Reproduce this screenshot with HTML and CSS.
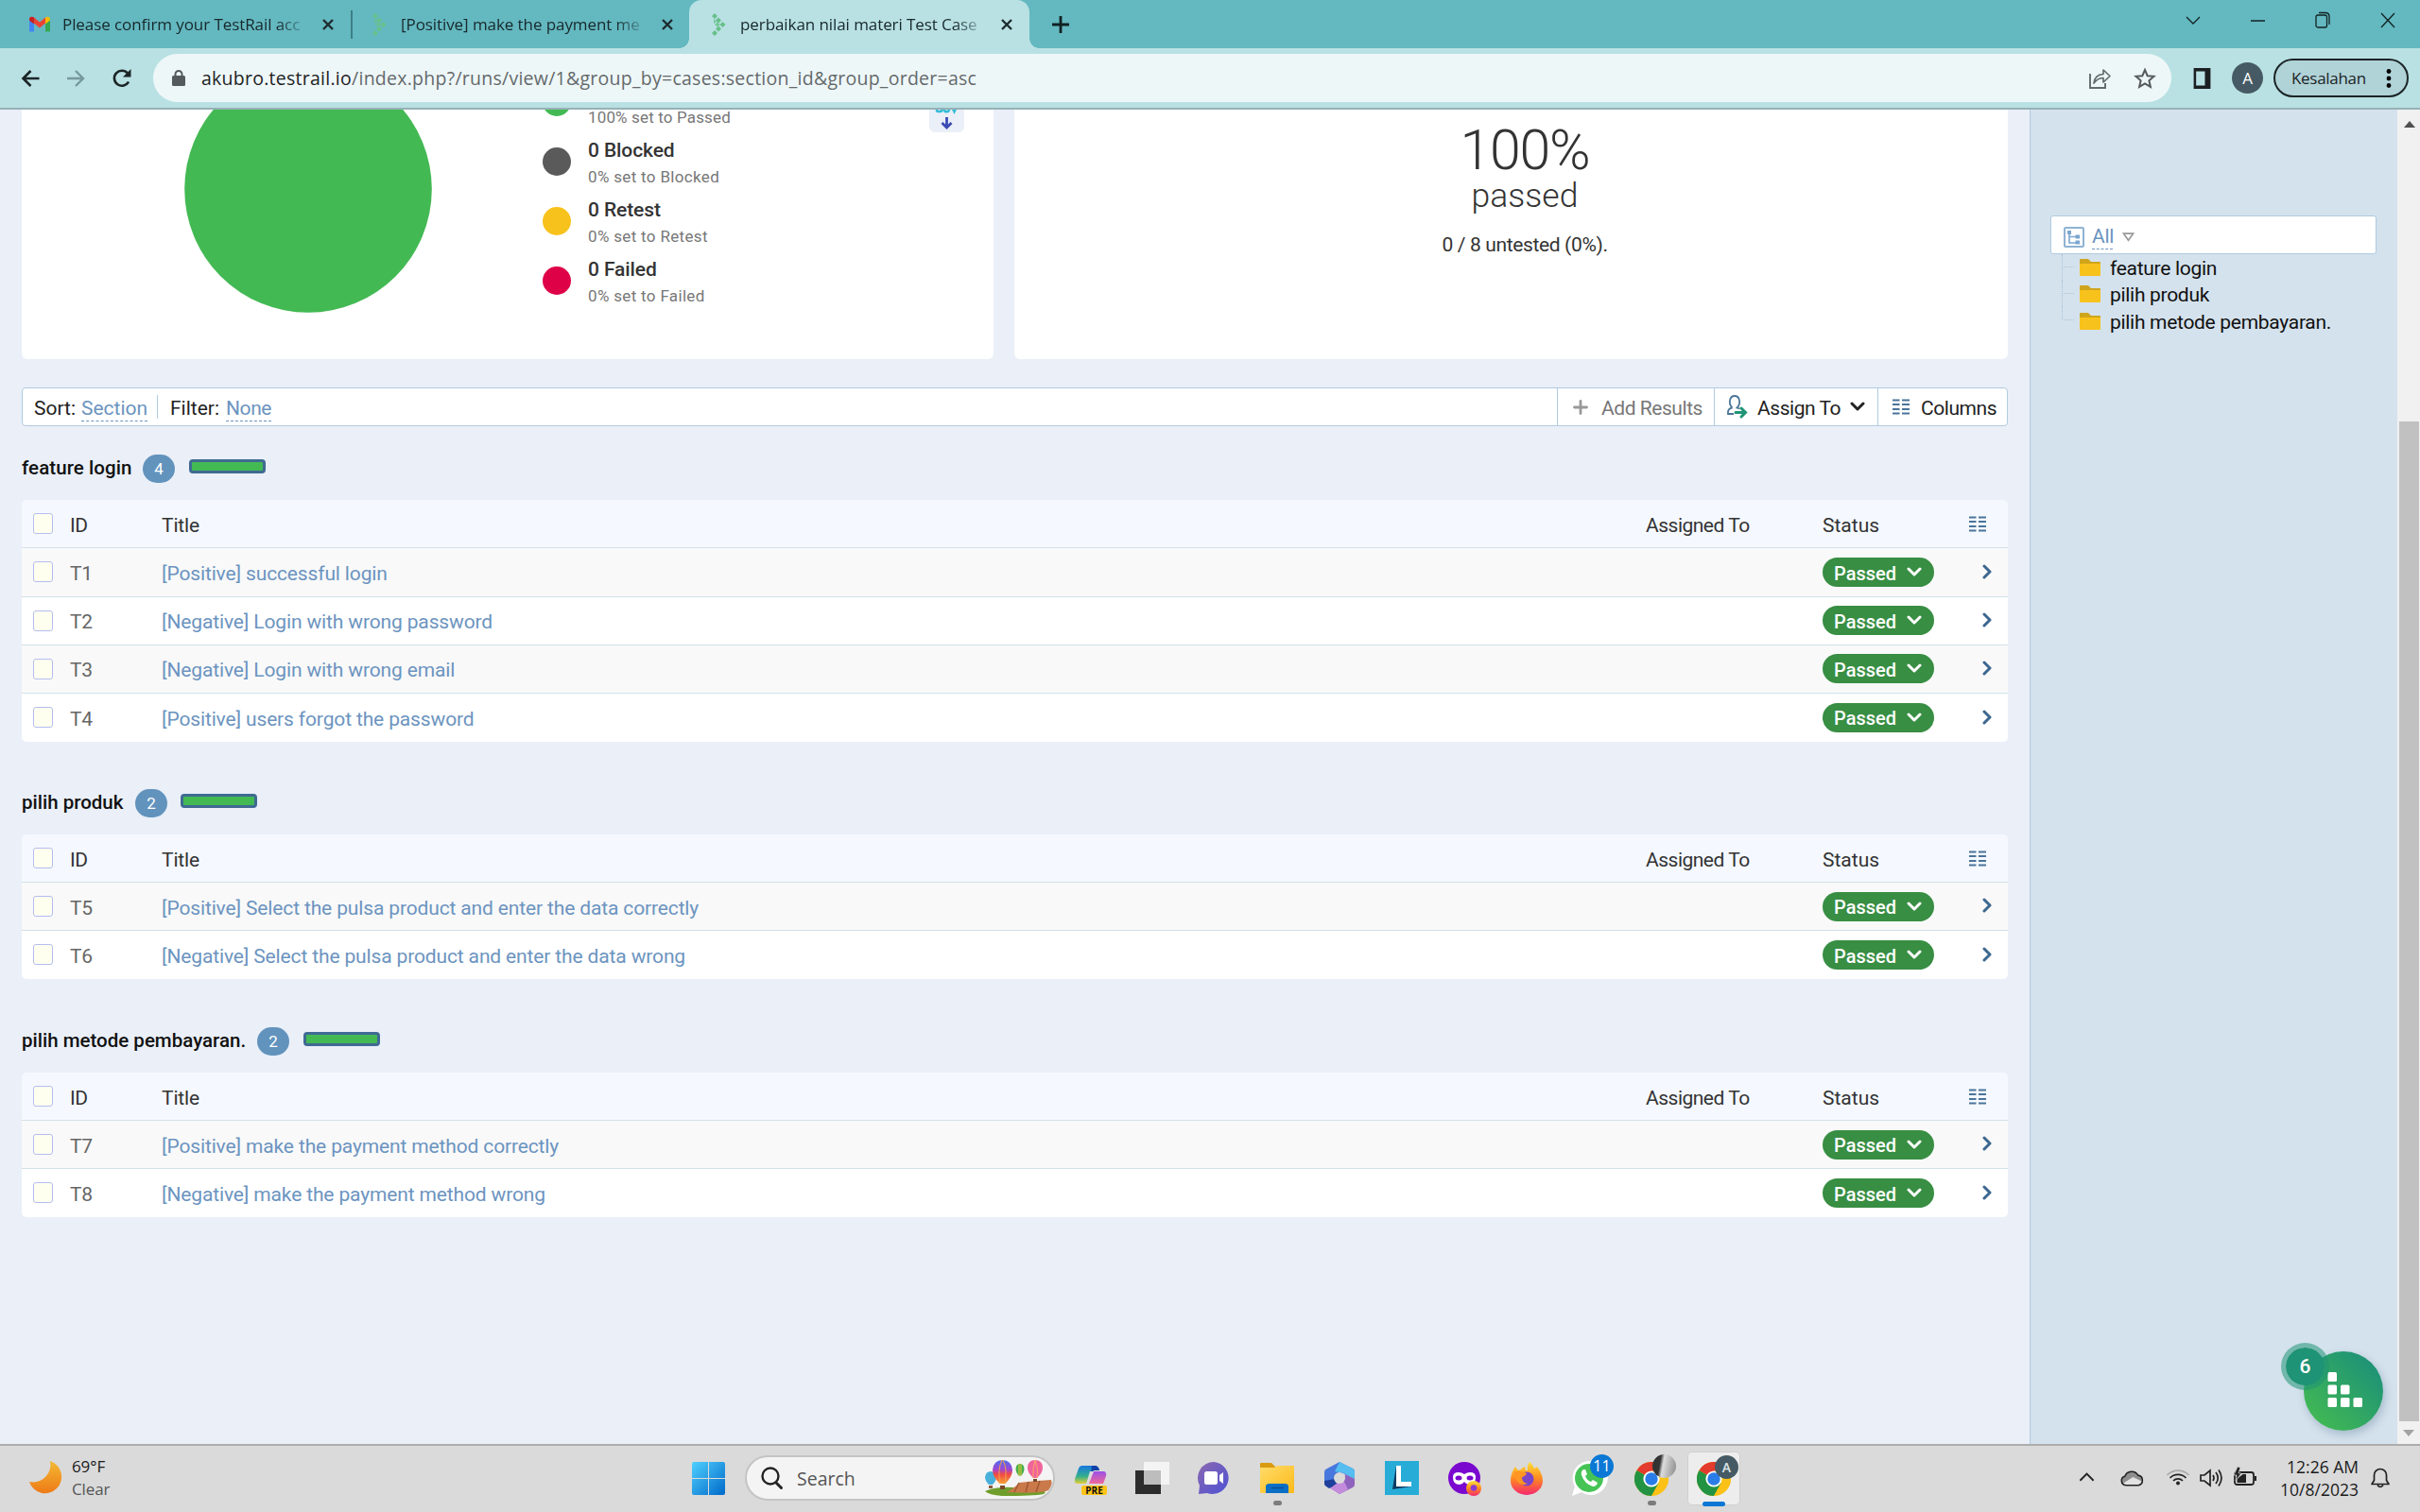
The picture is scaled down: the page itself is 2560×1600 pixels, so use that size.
FILE: index.html
```html
<!DOCTYPE html>
<html lang="en">
<head>
<meta charset="utf-8">
<title>perbaikan nilai materi Test Case</title>
<link rel="stylesheet" href="styles.css">
</head>
<body>
<svg class="defs" width="0" height="0">
  <defs>
    <symbol id="x" viewBox="0 0 14 14"><path d="M2 2l10 10M12 2L2 12" stroke="#1d2b2e" stroke-width="2.4" fill="none"/></symbol>
    <symbol id="rail" viewBox="0 0 16 24"><g fill="#67c08a"><path d="M4 0l3 3-3 3-3-3zM8 4.500l3 3-3 3-3-3zM12.500 9l3 3-3 3-3-3zM8 13.500l3 3-3 3-3-3zM4 18l3 3-3 3-3-3z"/><path d="M3 6l3 3-3 2zM7 9.500l3 2.500-3 2.500-3-2.500z" opacity=".8"/></g></symbol>
    <symbol id="down" viewBox="0 0 16 11"><path d="M2 2l6 6 6-6" fill="none" stroke="currentColor" stroke-width="3" stroke-linecap="round" stroke-linejoin="round"/></symbol>
    <symbol id="right" viewBox="0 0 11 16"><path d="M2 2l6 6-6 6" fill="none" stroke="#3c678f" stroke-width="3" stroke-linecap="round" stroke-linejoin="round"/></symbol>
    <symbol id="cols" viewBox="0 0 18 17"><path d="M0 1.500h7.500M10 1.500h8M0 6h7.500M10 6h8M0 11h7.500M10 11h8M0 15.500h7.500M10 15.500h8" stroke="#4a749a" stroke-width="1.800"/></symbol>
    <symbol id="folder" viewBox="0 0 22 18"><path d="M0 1q0-1 1-1h8l3 3h9q1 0 1 1v5H0z" fill="#cfa51c"/><path d="M0 5h22v12q0 1-1 1H1q-1 0-1-1z" fill="#f8c21c"/></symbol>
    <symbol id="chrome" viewBox="0 0 36 36"><circle cx="18" cy="18" r="18" fill="#fbc116"/><path d="M18 18L2.400 9A18 18 0 0 1 33.600 9z" fill="#e33b2e"/><path d="M18 18L2.400 9A18 18 0 0 0 18 36l8-13.500z" fill="#229342"/><path d="M18 9.500h15.800a18 18 0 0 1 .3 16L18 36l7.500-13.500z" fill="#fbc116"/><circle cx="18" cy="18" r="8.600" fill="#fff"/><circle cx="18" cy="18" r="6.700" fill="#2a7de9"/></symbol>
    <linearGradient id="gw" x1="0" y1="0" x2="1" y2="1"><stop offset="0" stop-color="#4fd0ff"/><stop offset="1" stop-color="#0069c8"/></linearGradient>
    <linearGradient id="gm" x1="0" y1="0" x2="0" y2="1"><stop offset="0" stop-color="#f3b932"/><stop offset="1" stop-color="#ee7a17"/></linearGradient>
    <linearGradient id="gc" x1="0" y1="0" x2="0" y2="1"><stop offset="0" stop-color="#1677e0"/><stop offset=".6" stop-color="#35b08c"/><stop offset="1" stop-color="#e6cf35"/></linearGradient>
    <linearGradient id="gp" x1="0" y1="0" x2="0" y2="1"><stop offset="0" stop-color="#9a4fe8"/><stop offset="1" stop-color="#f0689a"/></linearGradient>
    <linearGradient id="gt" x1="0" y1="0" x2="1" y2="1"><stop offset="0" stop-color="#8c68b0"/><stop offset="1" stop-color="#4e52d4"/></linearGradient>
    <linearGradient id="gf" x1="0" y1="0" x2="0" y2="1"><stop offset="0" stop-color="#ffe03a"/><stop offset=".5" stop-color="#ff8a20"/><stop offset="1" stop-color="#f4266e"/></linearGradient>
    <linearGradient id="ge" x1="0" y1="0" x2="1" y2="1"><stop offset="0" stop-color="#ffdc6a"/><stop offset="1" stop-color="#fbb918"/></linearGradient>
    <linearGradient id="gb" x1="0" y1="0" x2="0" y2="1"><stop offset="0" stop-color="#4c70f0"/><stop offset=".4" stop-color="#a046d0"/><stop offset=".6" stop-color="#f04848"/><stop offset="1" stop-color="#f5a030"/></linearGradient>
    <linearGradient id="gfab" x1="0" y1="1" x2="1" y2="0"><stop offset=".1" stop-color="#42b953"/><stop offset=".85" stop-color="#1f9375"/></linearGradient>
  </defs>
</svg>

<header class="tabstrip">
  <div class="tab tab-first">
    <svg class="gmail" viewBox="0 0 22 16"><path d="M0 3v13h5V7z" fill="#4285f4"/><path d="M17 7v9h5V3z" fill="#34a853"/><path d="M0 2.500Q1-1 5 1l6 5 6-5v6l-6 5-6-5z" fill="#ea4335"/><path d="M17 1q4-2 5 1.500V4l-5 4z" fill="#fbbc04"/><path d="M0 2.500Q1-1 5 1v7L0 4z" fill="#c5221f"/></svg>
    <span class="tabtext t1">Please confirm your TestRail acc</span>
    <svg class="close"><use href="#x"/></svg>
  </div>
  <div class="tab tab-second">
    <svg class="rail"><use href="#rail"/></svg>
    <span class="tabtext t2">[Positive] make the payment me</span>
    <svg class="close"><use href="#x"/></svg>
  </div>
  <div class="tab tab-active">
    <svg class="rail"><use href="#rail"/></svg>
    <span class="tabtext t3">perbaikan nilai materi Test Case</span>
    <svg class="close"><use href="#x"/></svg>
  </div>
  <svg class="plus" viewBox="0 0 20 20"><path d="M10 1v18M1 10h18" stroke="#122" stroke-width="2.800"/></svg>
  <div class="winctl">
    <svg width="16" height="10" viewBox="0 0 16 10"><path d="M1 1l7 7 7-7" fill="none" stroke="#122" stroke-width="1.300"/></svg>
    <svg width="15" height="10" viewBox="0 0 15 10"><path d="M0 5h15" stroke="#122" stroke-width="1.500"/></svg>
    <svg width="16" height="19" viewBox="0 0 16 19"><rect x="1" y="4" width="11.500" height="13" rx="2" fill="none" stroke="#122" stroke-width="1.300"/><path d="M4 1.500h7q4 0 4 4V14" fill="none" stroke="#122" stroke-width="1.300"/></svg>
    <svg width="16" height="19" viewBox="0 0 16 19"><path d="M1 2l14 15M15 2L1 17" stroke="#122" stroke-width="1.300"/></svg>
  </div>
</header>

<nav class="toolbar">
  <svg class="back" viewBox="0 0 20 20"><path d="M19 10H2M10 2l-8 8 8 8" fill="none" stroke="#1c2426" stroke-width="2.600"/></svg>
  <svg class="fwd" viewBox="0 0 20 20"><path d="M1 10h17M10 2l8 8-8 8" fill="none" stroke="#76999c" stroke-width="2.400"/></svg>
  <svg class="reload" viewBox="0 0 20 20"><path d="M17 13.500A8 8 0 1 1 16 4.500" fill="none" stroke="#1c2426" stroke-width="2.600"/><path d="M19.500 0v8.500H11z" fill="#1c2426"/></svg>
  <div class="omnibox">
    <svg class="lock" viewBox="0 0 14 17"><rect x="0" y="6" width="14" height="11" rx="1.500" fill="#555a5c"/><path d="M3.500 7V4.500a3.500 3.500 0 0 1 7 0V7" fill="none" stroke="#555a5c" stroke-width="2"/></svg>
    <span class="url"><b>akubro.testrail.io</b>/index.php?/runs/view/1&amp;group_by=cases:section_id&amp;group_order=asc</span>
    <svg class="share" viewBox="0 0 23 22"><path d="M1 6v15h16v-5" fill="none" stroke="#5f6b6d" stroke-width="1.900"/><path d="M5 16q1-9 10-9.500V2l7 6.500-7 6.500v-4.500q-6 0-10 5.500z" fill="none" stroke="#5f6b6d" stroke-width="1.700" stroke-linejoin="round"/></svg>
    <svg class="star" viewBox="0 0 22 22"><path d="M11 2l2.700 6.200 6.800.6-5.100 4.500 1.500 6.600-5.900-3.500-5.900 3.500 1.500-6.600L1.500 8.800l6.800-.6z" fill="none" stroke="#555a5c" stroke-width="2"/></svg>
  </div>
  <svg class="panel" viewBox="0 0 21 26"><path d="M0 0h21v26H0zM3 4v18h11V4z" fill="#1c1f21" fill-rule="evenodd"/></svg>
  <div class="avatar">A</div>
  <div class="update"><span>Kesalahan</span><svg viewBox="0 0 6 20"><circle cx="3" cy="2.500" r="2.400"/><circle cx="3" cy="10" r="2.400"/><circle cx="3" cy="17.500" r="2.400"/></svg></div>
</nav>

<div class="page">
  <main class="content">
    <div class="cards">
      <section class="card pie-card">
        <svg class="pie" viewBox="0 0 262 262"><circle cx="131" cy="131" r="130.800" fill="#43b953"/></svg>
        <ul class="legend">
          <li class="cut"><i class="dot green"></i><div><small>100% set to Passed</small></div></li>
          <li><i class="dot gray"></i><div><strong>0 Blocked</strong><small>0% set to Blocked</small></div></li>
          <li><i class="dot yellow"></i><div><strong>0 Retest</strong><small>0% set to Retest</small></div></li>
          <li><i class="dot red"></i><div><strong>0 Failed</strong><small>0% set to Failed</small></div></li>
        </ul>
        <div class="csv"><svg viewBox="0 0 37 26"><g fill="none" stroke="#35bcd6" stroke-width="2.600"><path d="M8-3v3.500q0 1.500 1.500 1.500h2q2 0 2-2M16 0q0 2.300 2.500 2.300T21-1M24-3l2.500 5L29-3"/></g><path d="M18.500 8v11M13.500 14l5 5 5-5" fill="none" stroke="#3c4bb4" stroke-width="2.800"/></svg></div>
      </section>
      <section class="card stat-card">
        <div class="pct">100%</div>
        <div class="passed">passed</div>
        <div class="untested">0 / 8 untested (0%).</div>
      </section>
    </div>

    <div class="actions">
      <span class="lbl sort">Sort:</span><a class="dash section">Section</a><i class="sep"></i><span class="lbl filter">Filter:</span><a class="dash none">None</a>
      <div class="btn add"><svg width="16" height="16" viewBox="0 0 16 16"><path d="M8 1.500v13M1.500 8h13" stroke="#999" stroke-width="2.800" stroke-linecap="round"/></svg><span>Add Results</span></div>
      <div class="btn assign"><svg width="21" height="25" viewBox="0 0 21 25"><path d="M5.500 13.500C1 9 2.500 1 8 1s7 8 2.500 12.500l3 1M5.500 13.500Q1 14.500 1 18v2h6" fill="none" stroke="#4d7698" stroke-width="1.800"/><path d="M9 18.500h8M15 14l4.500 4.500L15 23" fill="none" stroke="#1f9375" stroke-width="3" stroke-linecap="round"/></svg><span>Assign To</span><svg class="caret" width="16" height="11"><use href="#down"/></svg></div>
      <div class="btn columns"><svg width="18" height="17"><use href="#cols"/></svg><span>Columns</span></div>
    </div>

    <section class="group group-tall">
      <h2><span class="h1w">feature login</span><em>4</em><i></i></h2>
      <div class="table">
        <div class="row head"><i class="cb"></i><span class="id">ID</span><span class="title">Title</span><span class="assigned">Assigned To</span><span class="status">Status</span><svg class="colicon"><use href="#cols"/></svg></div>
        <div class="row first odd"><i class="cb"></i><span class="id">T1</span><a class="title">[Positive] successful login</a><div class="pill"><span>Passed</span><svg><use href="#down"/></svg></div><svg class="go"><use href="#right"/></svg></div>
        <div class="row"><i class="cb"></i><span class="id">T2</span><a class="title">[Negative] Login with wrong password</a><div class="pill"><span>Passed</span><svg><use href="#down"/></svg></div><svg class="go"><use href="#right"/></svg></div>
        <div class="row odd"><i class="cb"></i><span class="id">T3</span><a class="title">[Negative] Login with wrong email</a><div class="pill"><span>Passed</span><svg><use href="#down"/></svg></div><svg class="go"><use href="#right"/></svg></div>
        <div class="row last"><i class="cb"></i><span class="id">T4</span><a class="title">[Positive] users forgot the password</a><div class="pill"><span>Passed</span><svg><use href="#down"/></svg></div><svg class="go"><use href="#right"/></svg></div>
      </div>
    </section>

    <section class="group">
      <h2><span class="h2w">pilih produk</span><em>2</em><i></i></h2>
      <div class="table">
        <div class="row head"><i class="cb"></i><span class="id">ID</span><span class="title">Title</span><span class="assigned">Assigned To</span><span class="status">Status</span><svg class="colicon"><use href="#cols"/></svg></div>
        <div class="row odd"><i class="cb"></i><span class="id">T5</span><a class="title">[Positive] Select the pulsa product and enter the data correctly</a><div class="pill"><span>Passed</span><svg><use href="#down"/></svg></div><svg class="go"><use href="#right"/></svg></div>
        <div class="row last"><i class="cb"></i><span class="id">T6</span><a class="title">[Negative] Select the pulsa product and enter the data wrong</a><div class="pill"><span>Passed</span><svg><use href="#down"/></svg></div><svg class="go"><use href="#right"/></svg></div>
      </div>
    </section>

    <section class="group">
      <h2><span class="h3w">pilih metode pembayaran.</span><em>2</em><i></i></h2>
      <div class="table">
        <div class="row head"><i class="cb"></i><span class="id">ID</span><span class="title">Title</span><span class="assigned">Assigned To</span><span class="status">Status</span><svg class="colicon"><use href="#cols"/></svg></div>
        <div class="row odd"><i class="cb"></i><span class="id">T7</span><a class="title">[Positive] make the payment method correctly</a><div class="pill"><span>Passed</span><svg><use href="#down"/></svg></div><svg class="go"><use href="#right"/></svg></div>
        <div class="row last"><i class="cb"></i><span class="id">T8</span><a class="title">[Negative] make the payment method wrong</a><div class="pill"><span>Passed</span><svg><use href="#down"/></svg></div><svg class="go"><use href="#right"/></svg></div>
      </div>
    </section>
  </main>

  <aside class="sidebar">
    <div class="picker">
      <svg width="22" height="22" viewBox="0 0 22 22"><rect x="1" y="1" width="20" height="20" rx="1" fill="none" stroke="#8fb3d3" stroke-width="2"/><path d="M6 5v12h7M6 10.500h7" fill="none" stroke="#7ba7cf" stroke-width="1.600"/><path d="M4 4h4v4H4zM12.500 8.500H17v4h-4.500zM12.500 14.500H17v4h-4.500z" fill="#7ba7cf"/></svg>
      <a class="dash">All</a>
      <svg class="tri" width="13" height="10" viewBox="0 0 13 10"><path d="M1.500 1.200h10l-5 7z" fill="none" stroke="#999" stroke-width="1.700"/></svg>
    </div>
    <ul class="tree">
      <li><svg><use href="#folder"/></svg><span>feature login</span></li>
      <li><svg><use href="#folder"/></svg><span>pilih produk</span></li>
      <li class="end"><svg><use href="#folder"/></svg><span>pilih metode pembayaran.</span></li>
    </ul>
    <div class="fab">
      <svg viewBox="0 0 84 84"><circle cx="42" cy="42" r="42" fill="url(#gfab)"/><g fill="#fff"><rect x="25.500" y="22" width="9.500" height="10" rx="1.500"/><rect x="25.500" y="35.500" width="9.500" height="10" rx="1.500"/><rect x="39" y="35.500" width="9.500" height="10" rx="1.500"/><rect x="25.500" y="49" width="9.500" height="10" rx="1.500"/><rect x="39" y="49" width="9.500" height="10" rx="1.500"/><rect x="52.500" y="49" width="9.500" height="10" rx="1.500"/></g></svg>
      <span class="fab-badge">6</span>
    </div>
  </aside>

  <div class="scrollbar"><i class="up"></i><i class="thumb"></i><i class="dn"></i></div>
</div>

<footer class="taskbar">
  <div class="weather">
    <svg width="33" height="34" viewBox="0 0 33 34"><path d="M22 0a17.500 17.500 0 1 1-22 22q10 2 17-5T22 0z" fill="url(#gm)"/></svg>
    <div><span class="deg">69°F</span><span class="clear">Clear</span></div>
  </div>
  <div class="apps">
    <svg class="win" viewBox="0 0 35 35"><path d="M0 2q0-2 2-2h15v17H0zM18 0h15q2 0 2 2v15H18zM0 18h17v17H2q-2 0-2-2zM18 18h17v15q0 2-2 2H18z" fill="url(#gw)"/></svg>
    <div class="search">
      <svg class="mag" viewBox="0 0 23 24"><circle cx="10" cy="10" r="8.500" fill="none" stroke="#222" stroke-width="2.400"/><path d="M16 17l5.500 5.500" stroke="#222" stroke-width="3" stroke-linecap="round"/></svg>
      <span>Search</span>
      <svg class="balloons" viewBox="0 0 72 38"><path d="M0 33q12-5 30-4l30 3q6 1 2 4-10 2-44 2Q4 37 0 33z" fill="#6f9e2c"/><path d="M23 34Q32 29 36 24q16-2 34-3 2 5-3 11-8 4-44 2z" fill="#c9794a"/><path d="M36 24l-5 10M46 23l-3 11M58 22l-4 12" stroke="#a25a34" stroke-width="1.500"/><path d="M0 18q1-6 6-6t6 6q0 4-4 8H4q-4-4-4-8z" fill="#48b0da"/><path d="M4 27h4v3H4z" fill="#8a5a3a"/><path d="M8 10.500Q9 0 18.500 0T29 10.500q0 7-7.500 14.500h-6Q8 17.500 8 10.500z" fill="url(#gb)"/><path d="M18 0q-5 10-2 25M19 0q5 10 2 25" fill="none" stroke="#f6a04a" stroke-width="1"/><path d="M16 27h5v4h-5z" fill="#7a4a2a"/><path d="M32.500 10q0-6 4.500-6t4.500 6q0 3-3 6.500h-3q-3-3.500-3-6.500z" fill="#48ad4c"/><path d="M36 4.500v12M38 4.500v12" stroke="#e9cc33"/><path d="M45 8.500Q45 0 53 0t8 8.500q0 5-6 10.500h-4q-6-5.500-6-10.500z" fill="#f0649b"/><path d="M53 0q-3 10-2 19M53 0q4 10 2 19" fill="none" stroke="#ffa463"/><path d="M51 20h4v3h-4z" fill="#7a4a2a"/></svg>
    </div>
    <svg class="copilot" viewBox="0 0 34 34"><path d="M8 3h13q4 0 5 5h-6L14 21q-1 1-4 1H3q-4 0-3-5L4 6q1-3 4-3z" fill="url(#gc)"/><path d="M18 3h3q4 0 5 5h-6l-3 3z" fill="#1242a8"/><path d="M20 9h10q4 0 3 5l-3 8H13z" fill="url(#gp)"/><path d="M20 9h-4l-4 13h3z" fill="#dcd9de"/><rect x="7" y="24" width="27" height="10" rx="2" fill="#fcc419"/><text x="20.500" y="32.700" text-anchor="middle">PRE</text></svg>
    <svg class="taskview" viewBox="0 0 36 34"><path d="M0 9h27v25H0z" fill="#2c2c2c"/><path d="M9 0h27v24H9z" fill="#f4f4f4"/><path d="M9 9h18v15H9z" fill="#bdbdbd"/></svg>
    <svg class="chat" viewBox="0 0 34 34"><path d="M17 0a17 17 0 1 1-7 33L1 34l1-9A17 17 0 0 1 17 0z" fill="url(#gt)"/><rect x="7" y="10" width="14" height="14" rx="2.500" fill="#fff"/><path d="M23 14l4-3v12l-4-3z" fill="#fff"/></svg>
    <div class="app explorer"><svg viewBox="0 0 36 34"><path d="M0 2q0-1 1-1h11l4 4H34v8H0z" fill="#d99a10"/><path d="M0 6q0 0 1 0h14l3-2h18v28q0 1-1 1H1q-1 0-1-1z" fill="url(#ge)"/><path d="M6 33v-7q0-3 4-3h16q4 0 4 3v7z" fill="#0b6fc6"/><path d="M12 27.500h13" stroke="#0a4f96" stroke-width="1.500"/></svg><i class="run"></i></div>
    <svg class="m365" viewBox="0 0 32 34"><path d="M16 0l14 7q2 1 2 3v10L20 12 11 20l-2 8-7-3q-2-1-2-3V11q0-3 3-4z" fill="#4878dd"/><path d="M16 0l14 7q2 1 2 3v10l-11-8-10-2z" fill="#55bdf0"/><path d="M32 18v6q0 2-2 3l-14 7-10-7 14-5 2-9z" fill="#8f63bd"/><path d="M0 20l11-2 3 6-9 4-3-2q-2-1-2-3z" fill="#1f3f9c"/><path d="M16 34l-10-6 8-6 7-1 4 8z" fill="#c48bdc"/><circle cx="16" cy="17" r="6" fill="#dadada"/></svg>
    <svg class="ell" viewBox="0 0 36 36"><path d="M0 0h36v36H0z" fill="#27acd8"/><path d="M12 5h5v17h11v5H12z" fill="#fff"/><path d="M12 5v22l-4 3zM12 27h16l-20 3z" fill="#0e3b62"/></svg>
    <svg class="mask" viewBox="0 0 36 36"><circle cx="17" cy="17" r="17" fill="#7a08cf"/><path d="M5 16q0-5 6-5 3 0 6 2 3-2 6-2 6 0 6 5 0 8-7 8-3 0-5-3-2 3-5 3-7 0-7-8z" fill="#fff"/><ellipse cx="11" cy="17" rx="3.500" ry="2.500" fill="#7a08cf"/><ellipse cx="23" cy="17" rx="3.500" ry="2.500" fill="#7a08cf"/><circle cx="27" cy="28" r="8" fill="url(#gf)"/><circle cx="27" cy="27.500" r="3.300" fill="#8b3bd0"/></svg>
    <svg class="fox" viewBox="0 0 34 36"><path d="M20 1q4 3 5 7l3-2q6 8 6 15a17 15 0 0 1-34 0q0-8 5-15l3 4 3-1q1-2 4-3l1 4h2q-1-5 2-9z" fill="url(#gf)"/><circle cx="17" cy="19" r="7.500" fill="#7a45c8"/><path d="M3 12q6-3 14 1-1 3-5 4 0 6 6 7-8 3-12-4z" fill="#ff9522"/></svg>
    <div class="app wa"><svg viewBox="0 0 36 37"><path d="M18 0a18 18 0 1 1-8 33L0 37l3-10A18 18 0 0 1 18 0z" fill="#fff"/><circle cx="18" cy="18" r="15" fill="#45c455"/><path d="M12 9q-3 2-2 6 3 9 12 12 4 0 5-4l-5-3-2 2q-4-1-6-6l2-2-2-5z" fill="#fff"/></svg><b>11</b></div>
    <div class="app ch1"><svg><use href="#chrome"/></svg><b></b><i class="run"></i></div>
    <div class="app ch2"><svg><use href="#chrome"/></svg><b>A</b><i class="run on"></i></div>
  </div>
  <div class="tray">
    <svg class="chev" viewBox="0 0 18 12"><path d="M1.500 10L9 2.500l7.500 7.500" fill="none" stroke="#222" stroke-width="2"/></svg>
    <svg class="cloud" viewBox="0 0 26 18"><path d="M6 17a5 5 0 0 1-1-9.800A8 8 0 0 1 19.500 6 5.600 5.600 0 0 1 20 17z" fill="#8e8e8e"/><path d="M3 15l11-7 10 5q0 4-4 4H6q-2 0-3-2z" fill="#e2e2e2"/><path d="M6 17a5 5 0 0 1-1-9.800A8 8 0 0 1 19.500 6 5.600 5.600 0 0 1 20 17z" fill="none" stroke="#222" stroke-width="1.600"/></svg>
    <svg class="wifi" viewBox="0 0 24 18"><g fill="none" stroke="#222" stroke-width="1.700"><path d="M.5 7a16 16 0 0 1 23 0" stroke="#aaa"/><path d="M3.500 10a12 12 0 0 1 17 0M7 13a7 7 0 0 1 10 0"/></g><circle cx="12" cy="15.500" r="2" fill="#222"/></svg>
    <svg class="vol" viewBox="0 0 24 20"><g fill="none" stroke="#222" stroke-width="1.700"><path d="M1 7h4l6-5v16l-6-5H1z"/><path d="M14 7q2 3 0 6M17 4q4.500 6 0 12M20 1.500q6 8.500 0 17"/></g></svg>
    <svg class="bat" viewBox="0 0 25 20"><rect x="1" y="5" width="20" height="13" rx="2.500" fill="none" stroke="#222" stroke-width="1.800"/><path d="M3.500 16V12l6-5H13v9z" fill="#222"/><path d="M22 9h2v5h-2z" fill="#222"/><path d="M4-1L0 8h3l-1 6 6-8H5l2-6z" fill="#222" stroke="#dadada" stroke-width=".7"/></svg>
    <div class="clock"><span>12:26 AM</span><span class="date">10/8/2023</span></div>
    <svg class="bell" viewBox="0 0 20 22"><path d="M1 17.500l2.500-4V8a6.500 6.500 0 0 1 13 0v5.500l2.500 4zM7 18.500q3 4 6 0" fill="none" stroke="#222" stroke-width="1.700" stroke-linejoin="round"/></svg>
  </div>
</footer>
</body>
</html>
```
FILE: styles.css
```css
* { box-sizing: border-box; }
body { margin: 0; width: 2560px; height: 1600px; overflow: hidden; display: flex; flex-direction: column; font-family: Roboto, "Liberation Sans", sans-serif; font-size: 21px; color: #333; }
svg { display: block; flex: none; overflow: visible; }
.defs { position: absolute; }
ul { list-style: none; margin: 0; padding: 0; }
span, a, div { white-space: nowrap; }

/* browser chrome */
.tabstrip, .toolbar, .taskbar { font-family: "Open Sans", "Noto Sans", sans-serif; flex: none; }
.tabstrip { height: 51px; background: #64b8c0; display: flex; align-items: center; color: #17282b; }
.tab { display: flex; align-items: center; height: 51px; }
.tabtext { font-size: 17px; line-height: 26px; letter-spacing: -.08px; overflow: hidden; flex: none; width: 258px; -webkit-mask-image: linear-gradient(90deg, #000 88%, rgba(0, 0, 0, .1)); mask-image: linear-gradient(90deg, #000 88%, rgba(0, 0, 0, .1)); }
.close { width: 14px; height: 14px; }
.tab-first { width: 340px; padding-left: 31px; margin-right: 31px; }
.gmail { width: 22px; height: 17px; margin-right: 13px; }
.t1 { margin-right: 16px; }
.tab-second { width: 358px; padding-left: 22px; position: relative; }
.tab-second::before { content: ""; position: absolute; left: 0; top: 11px; height: 30px; width: 2px; background: #3c7f86; }
.rail { width: 16px; height: 24px; margin-right: 15px; }
.t2 { margin-right: 17px; }
.t3 { margin-right: 17px; }
.tab-active { width: 360px; padding-left: 23px; background: #b9e1e3; border-radius: 13px 13px 0 0; position: relative; }
.tab-active::before, .tab-active::after { content: ""; position: absolute; bottom: 0; width: 10px; height: 10px; background: radial-gradient(circle at 0 0, transparent 9.500px, #b9e1e3 10px); left: -10px; }
.tab-active::after { left: auto; right: -10px; background: radial-gradient(circle at 100% 0, transparent 9.500px, #b9e1e3 10px); }
.plus { width: 20px; height: 20px; margin-left: 23px; }
.winctl { display: flex; align-items: center; gap: 53px; margin-left: auto; padding-right: 26px; padding-bottom: 8px; }

.toolbar { height: 65px; background: #b9e1e3; border-bottom: 2px solid #97b1b6; display: flex; align-items: center; padding-left: 22px; }
.back { width: 21px; height: 20px; }
.fwd { width: 20px; height: 20px; margin-left: 27px; }
.reload { width: 20px; height: 20px; margin-left: 29px; }
.omnibox { margin-left: 23px; width: 2135px; height: 51px; border-radius: 26px; background: #eef7f8; display: flex; align-items: center; padding-left: 20px; }
.lock { width: 14px; height: 17px; }
.url { margin-left: 17px; margin-top: -1px; font-size: 19.500px; color: #64696b; letter-spacing: .26px; }
.url b { font-weight: 400; color: #1d2224; }
.share { width: 23px; height: 22px; margin-left: auto; }
.star { width: 22px; height: 22px; margin: 0 17px 0 25px; }
.panel { width: 21px; height: 22px; margin-left: 22px; }
.avatar { width: 33px; height: 33px; border-radius: 50%; background: #455a64; color: #fff; font-size: 17px; line-height: 33px; text-align: center; margin-left: 21px; }
.update { margin-left: 11px; width: 143px; height: 41px; border: 2px solid #1c2426; border-radius: 21px; background: #b0d3d8; display: flex; align-items: center; padding-left: 17px; font-size: 17px; color: #1c2426; }
.update span { width: 80px; letter-spacing: -.3px; }
.update svg { width: 6px; height: 22px; margin-left: 20px; }

/* page */
.page { height: 1412px; flex: none; display: flex; background: #eaeff8; overflow: hidden; }
.content { width: 2147px; flex: none; padding: 0 23px 0 23px; }
.cards { display: flex; gap: 22px; height: 264px; }
.card { background: #fff; border-radius: 0 0 6px 6px; overflow: hidden; }
.pie-card { width: 1028px; flex: none; display: flex; align-items: flex-start; }
.pie { width: 262px; height: 262px; margin: -47px 0 0 172px; }
.legend { margin: -39px 0 0 117px; width: 340px; }
.legend li { height: 63px; display: flex; }
.legend .cut div { padding-top: 34px; }
.dot { width: 30px; height: 30px; border-radius: 50%; margin: 16px 18px 0 0; }
.green { background: #43b953; }
.gray { background: #5a5a5a; }
.yellow { background: #f8c21c; }
.red { background: #de0147; }
.legend strong, .legend small { display: block; }
.legend strong { font-weight: 500; font-size: 21px; line-height: 28px; letter-spacing: -.1px; padding-top: 5px; }
.legend small { font-size: 17px; line-height: 24px; color: #777; letter-spacing: .33px; padding-top: 2px; }
.legend .cut small { letter-spacing: .15px; padding-top: 1px; }
.csv { width: 37px; height: 24px; background: #eaeff8; border-radius: 0 0 6px 6px; margin-left: 69px; overflow: hidden; }
.csv svg { width: 37px; height: 26px; }
.stat-card { flex: 1; display: flex; flex-direction: column; align-items: center; padding-left: 29px; }
.pct { font-size: 59px; font-weight: 300; line-height: 60px; margin-top: 13px; letter-spacing: -1.200px; }
.passed { font-size: 35.500px; font-weight: 300; line-height: 40px; margin-top: -2px; }
.untested { line-height: 30px; margin-top: 17px; letter-spacing: -.35px; }

.actions { margin-top: 30px; height: 41px; background: #fff; border: 1px solid #b0cbe0; border-radius: 4px; display: flex; align-items: center; padding-left: 12px; color: #222; }
.lbl { line-height: 28px; margin-top: 2px; }
.sort { width: 50px; }
.filter { width: 59px; }
.dash { color: #6c94c0; border-bottom: 1px dashed #6c94c0; line-height: 26px; margin-top: 3px; }
.section { width: 70px; }
.none { width: 48px; letter-spacing: -.4px; }
.sep { width: 1px; height: 25px; background: #b0cbe0; margin: 0 13px 0 10px; }
.btn { height: 39px; border-left: 1px solid #b0cbe0; display: flex; align-items: center; }
.btn span { line-height: 28px; margin-top: 3px; letter-spacing: -.45px; }
.add { margin-left: auto; width: 166px; padding-left: 16px; color: #777; }
.add span { margin-left: 14px; width: 107px; }
.assign { width: 173px; padding-left: 13px; }
.assign span { margin-left: 11px; width: 87px; }
.caret { margin-left: 11px; color: #222; }
.columns { width: 137px; padding-left: 15px; }
.columns span { margin-left: 12px; }

.group { height: 252px; }
.group-tall { height: 354px; }
.group h2 { margin: 0; height: 78px; padding-top: 30px; display: flex; align-items: flex-start; font-size: 20.500px; font-weight: 500; color: #111; }
.group h2 span { line-height: 28px; flex: none; }
.h1w { width: 128px; letter-spacing: .08px; }
.h2w { width: 120px; }
.h3w { width: 249px; }
.group h2 em { font-style: normal; width: 34px; height: 30px; border-radius: 15px; background: #6293bd; color: #fff; font-weight: 400; font-size: 17px; line-height: 31px; text-align: center; }
.group h2 i { width: 81px; height: 15px; border: 3px solid #3f6a93; border-radius: 4px; background: #43b953; margin: 5px 0 0 15px; }
.h2w + em + i { margin-left: 14px !important; }
.table { border-radius: 5px; overflow: hidden; }
.row { height: 51px; display: flex; align-items: center; background: #fff; border-bottom: 1px solid #d2e0ea; padding-left: 12px; }
.row.odd { background: #f9f9f9; }
.row.first { height: 52px; }
.row.last { border-bottom: 0; }
.row.head { background: #f5f9ff; }
.cb { width: 21px; height: 22px; border: 1px solid #b4bdf0; border-radius: 3px; background: #fffff0; margin-top: -1px; }
.id { width: 97px; margin-left: 18px; color: #666; letter-spacing: -.4px; }
.title { width: 1570px; color: #6c94c0; letter-spacing: -.14px; }
.row span, .row a { line-height: 28px; padding-top: 3px; }
.group-tall .row:not(.first):not(.head) span, .group-tall .row:not(.first):not(.head) a { padding-top: 2px; }
.head .id, .head .title, .head .assigned { color: #333; }
.head .assigned { width: 187px; letter-spacing: -.5px; }
.head .status { width: 155px; }
.row:not(.head) .title { width: 1757px; }
.colicon { width: 18px; height: 17px; }
.pill { width: 118px; height: 31px; border-radius: 16px; background: #388e43; color: #fff; display: flex; align-items: center; padding-left: 12px; margin-right: 51px; }
.pill span { font-weight: 500; font-size: 20px; width: 65px; padding-top: 2px; }
.group-tall .row:not(.first) .pill { margin-top: -1px; }
.pill svg { width: 16px; height: 11px; margin-left: 12px; }
.go { width: 11px; height: 16px; margin-top: -2px; }

.sidebar { width: 389px; flex: none; border-left: 1px solid #b0cbe0; background: #d4e2ed; padding: 112px 22px 0 21px; position: relative; }
.picker { width: 345px; height: 41px; background: #fff; border: 1px solid #b0cbe0; border-radius: 3px; display: flex; align-items: center; padding: 4px 0 0 13px; }
.picker .dash { margin: 0 0 0 8px; width: 22px; line-height: 26px; letter-spacing: -.3px; }
.tri { margin-left: 10px; }
.tree { padding: 0 0 0 12px; color: #111; }
.tree li { height: 28px; display: flex; align-items: center; position: relative; padding-left: 18px; border-left: 1px dotted #a9c3d9; }
.tree li::before { content: ""; position: absolute; left: 1px; top: 13px; width: 11px; border-top: 1px dotted #a9c3d9; }
.tree li.end { height: 30px; border-color: transparent; }
.tree li.end::after { content: ""; position: absolute; left: -1px; top: 0; height: 13px; border-left: 1px dotted #a9c3d9; }
.tree svg { width: 22px; height: 18px; }
.tree span { margin-left: 10px; padding-top: 1px; letter-spacing: -.3px; }
.fab { position: absolute; left: 289px; top: 1314px; width: 84px; height: 84px; border-radius: 50%; box-shadow: 2px 4px 10px rgba(60, 90, 120, .3); }
.fab svg { width: 84px; height: 84px; }
.fab-badge { position: absolute; left: -24px; top: -9px; width: 51px; height: 50px; border: 5px solid rgba(31, 147, 117, .55); background: #1f9375; background-clip: padding-box; border-radius: 50%; color: #fff; font-size: 21px; font-weight: 500; line-height: 41px; text-align: center; }
.scrollbar { width: 24px; background: #f1f1f1; display: flex; flex-direction: column; align-items: center; }
.up { border: 6px solid transparent; border-top: 0; border-bottom: 7px solid #505050; margin: 12px 0 0 1px; }
.thumb { width: 21px; height: 1058px; background: #c1c1c1; margin-top: 311px; }
.dn { border: 6px solid transparent; border-bottom: 0; border-top: 7px solid #a3a3a3; margin-top: 9px; }

/* taskbar */
.taskbar { height: 72px; border-top: 2px solid #adadad; background: #dadada; display: flex; align-items: flex-start; color: #1b1b1b; font-size: 17px; }
.weather { display: flex; width: 732px; padding: 16px 0 0 31px; flex: none; }
.weather div { display: flex; flex-direction: column; margin-left: 12px; margin-top: -6px; }
.deg, .clear { line-height: 24px; letter-spacing: -.1px; }
.clear { color: #555; }
.apps { display: flex; width: 1467px; flex: none; }
.apps > * { flex: none; }
.win { width: 35px; height: 35px; margin-top: 17px; }
.search { width: 328px; height: 48px; margin: 10px 0 0 21px; border-radius: 24px; background: #f4f4f4; border: 2px solid #c4c4c4; display: flex; align-items: center; padding-left: 15px; font-size: 19.500px; color: #555; }
.search span { width: 62px; margin-left: 15px; }
.mag { width: 23px; height: 24px; }
.balloons { width: 72px; height: 38px; margin-left: 137px; }
.copilot { width: 34px; height: 34px; margin: 18px 0 0 21px; }
.copilot text { font: 700 10px "Open Sans", sans-serif; fill: #111; }
.taskview { width: 36px; height: 34px; margin: 17px 0 0 30px; }
.chat { width: 34px; height: 34px; margin: 17px 0 0 30px; }
.app { position: relative; width: 36px; height: 60px; }
.app svg { width: 36px; height: 36px; }
.run { position: absolute; left: 14px; top: 58px; width: 9px; height: 5px; border-radius: 3px; background: #7c7c7c; }
.explorer { margin-left: 32px; }
.explorer svg { height: 34px; margin-top: 17px; }
.m365 { width: 32px; height: 34px; margin: 17px 0 0 32px; }
.ell { width: 36px; height: 36px; margin: 16px 0 0 32px; }
.mask { width: 36px; height: 36px; margin: 17px 0 0 31px; }
.fox { width: 34px; height: 36px; margin: 16px 0 0 30px; }
.wa { margin-left: 31px; }
.wa svg { height: 37px; margin-top: 16px; }
.app b { position: absolute; border-radius: 50%; width: 25px; height: 25px; text-align: center; }
.wa b { left: 19px; top: 9px; background: #0a78d4; color: #fff; font: 400 16px/25px "Open Sans", sans-serif; }
.ch1 { margin-left: 30px; }
.ch1 svg, .ch2 svg { margin-top: 17px; }
.ch1 b { left: 19px; top: 9px; background: linear-gradient(100deg, #333 32%, #ddd 45%, #888); }
.ch2 { margin: 6px 0 0 20px; width: 56px; height: 57px; background: #ededed; border: 1px solid #d0d0d0; border-radius: 5px; }
.ch2 svg { margin: 10px 0 0 9px; }
.ch2 b { left: 28px; top: 3px; background: #455a64; color: #dfe5e8; font: 600 14px/25px "Open Sans", sans-serif; }
.ch2 .on { left: 15px; top: 52px; width: 24px; background: #0a78d4; }
.tray { display: flex; flex: 1; }
.chev { width: 17px; height: 12px; margin-top: 27px; }
.cloud { width: 25px; height: 18px; margin: 25px 0 0 27px; }
.wifi { width: 24px; height: 18px; margin: 24px 0 0 24px; }
.vol { width: 24px; height: 20px; margin: 24px 0 0 11px; }
.bat { width: 25px; height: 20px; margin: 23px 0 0 12px; }
.clock { width: 107px; display: flex; flex-direction: column; text-align: right; padding-top: 10px; font-size: 17.500px; }
.clock span { line-height: 24px; }
.bell { width: 20px; height: 22px; margin: 23px 0 0 13px; }
```
